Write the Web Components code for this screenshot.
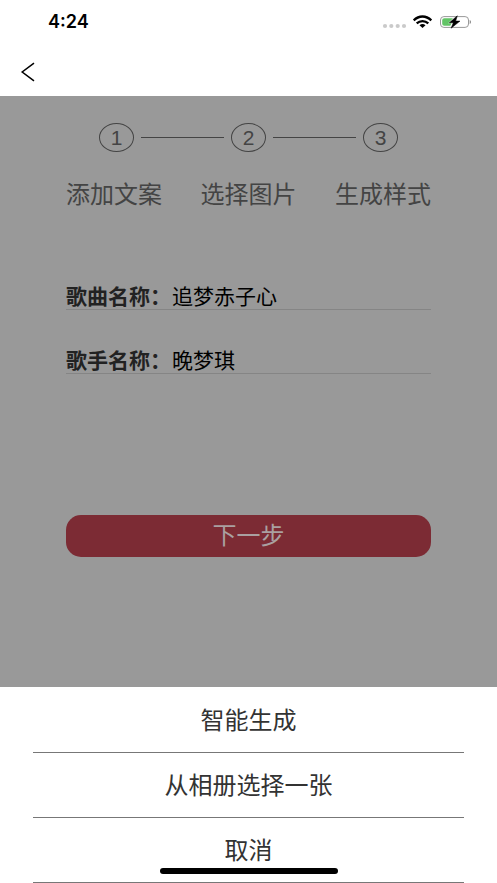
<!DOCTYPE html>
<html lang="zh-CN">
<head>
<meta charset="utf-8">
<meta name="viewport" content="width=device-width, initial-scale=1">
<title>歌曲信息</title>
<style>
  body { margin: 0; font-family: "Liberation Sans", "Noto Sans CJK SC", sans-serif; background: #fff; color: #333; }
</style>
</head>
<body>
<song-app></song-app>
<script>
const define = (name, markup, setup) => {
  const template = document.createElement('template');
  template.innerHTML = `<style>*{box-sizing:border-box}</style>${markup}`;
  customElements.define(name, class extends HTMLElement {
    constructor() {
      super();
      this.attachShadow({ mode: 'open' }).append(template.content.cloneNode(true));
    }
    connectedCallback() { if (setup) setup(this, this.shadowRoot); }
  });
};

define('status-bar', `
<style>
  :host { display: flex; justify-content: space-between; align-items: center; height: 44px; padding: 0 26px 0 48px; color: #000; }
  time { font: 600 18px/20px Inter, sans-serif; }
  svg { display: block; }
</style>
<time>4:24</time>
<svg width="90" height="16" viewBox="0 0 90 16" role="img" aria-label="信号、无线网络、电池充电中">
  <g fill="#cacaca"><circle cx="4" cy="12" r="2.1"/><circle cx="10.3" cy="12" r="2.1"/><circle cx="16.7" cy="12" r="2.1"/><circle cx="23" cy="12" r="2.1"/></g>
  <g fill="none" stroke="#000" stroke-width="2.3">
    <path d="M32.7 6.3C38 1.2 45 1.2 50.3 6.3"/>
    <path d="M35.7 9.4C39 6.3 44 6.3 47.3 9.4"/>
  </g>
  <path d="M38.5 11.2Q41.5 8.8 44.5 11.2L41.5 14Z"/>
  <rect x="59.5" y="2.6" width="28" height="10.8" rx="3.4" fill="#fff" stroke="#999"/>
  <path d="M63.3 4.2H72L67.2 9.2H70.5L69.3 11.8H63.3Q61.2 11.8 61.2 9.8V6.2Q61.2 4.2 63.3 4.2Z" fill="#62c466"/>
  <path d="M76.3 1.8L68.3 8.7H72.3L70.1 14.2L79 7.1H74.7Z" stroke="#000" stroke-width=".5" stroke-linejoin="round"/>
  <path d="M88.7 6V10Q90 9.4 90 8T88.7 6Z" fill="#888"/>
</svg>`);

define('nav-bar', `
<style>
  :host { display: flex; align-items: center; height: 52px; padding: 4px 12px 0; }
  button { display: grid; place-items: center; width: 32px; height: 32px; padding: 0; border: 0; background: none; color: #000; }
</style>
<button type="button" aria-label="返回">
  <svg width="16" height="20" viewBox="0 0 16 20" fill="none" stroke="currentColor" stroke-width="1.5"><path d="M14 1.2L2.2 10L14 18.8"/></svg>
</button>`);

define('step-number', `
<style>
  :host { display: grid; place-items: center; width: 35px; height: 29px; border: 1px solid #444; border-radius: 50%; font-size: 21px; line-height: 27px; color: #444; }
</style>
<slot></slot>`);

define('step-progress', `
<style>
  :host { display: block; color: #444; }
  .track { display: flex; align-items: center; gap: 7px; padding: 0 33px; }
  .line { flex: 1; height: 1px; background: #444; }
  .names { display: flex; justify-content: space-between; margin-top: 27px; font-size: 24px; line-height: 32px; }
</style>
<div class="track">
  <step-number>1</step-number><span class="line"></span>
  <step-number>2</step-number><span class="line"></span>
  <step-number>3</step-number>
</div>
<div class="names"><span>添加文案</span><span>选择图片</span><span>生成样式</span></div>`);

define('text-field', `
<style>
  :host { display: block; }
  div { display: flex; align-items: center; gap: 1px; border-bottom: 1px solid #858585; font-size: 21px; line-height: 24px; }
  label { font-weight: 700; color: #222; }
  input { flex: 1; min-width: 0; height: 24px; margin: 0; padding: 0; border: 0; outline: 0; background: none; font: inherit; color: #000; }
</style>
<div><label for="field"></label><input id="field" type="text"></div>`, (host, root) => {
  root.querySelector('label').textContent = host.getAttribute('label');
  root.querySelector('input').value = host.getAttribute('value');
});

define('primary-button', `
<style>
  :host { display: block; }
  button { display: block; width: 100%; height: 42px; padding: 0; border: 0; border-radius: 15px; background: #7c2b34; color: #aaa0a1; font: inherit; font-size: 24px; line-height: 42px; }
</style>
<button type="button"><slot></slot></button>`);

define('sheet-action', `
<style>
  :host { display: block; }
  button { display: block; width: 100%; height: 65px; padding: 2px 0 0; border: 0; border-bottom: 1px solid #777; background: none; color: #333; font: inherit; font-size: 24px; line-height: 62px; }
</style>
<button type="button"><slot></slot></button>`);

define('action-sheet', `
<style>
  :host { display: block; position: relative; padding: 1px 33px 0; background: #fff; }
  .home { position: absolute; left: 50%; bottom: 9px; width: 178px; height: 6px; margin-left: -89px; border-radius: 3px; background: #000; }
</style>
<slot></slot><span class="home"></span>`);

define('song-app', `
<style>
  :host { display: flex; flex-direction: column; min-height: 100vh; }
  main { flex: 1; padding: 27px 66px; background: #999; }
  form { display: grid; gap: 39px; margin-top: 74px; }
  primary-button { margin-top: 102px; }
</style>
<status-bar></status-bar>
<nav-bar></nav-bar>
<main>
  <step-progress></step-progress>
  <form>
    <text-field label="歌曲名称：" value="追梦赤子心"></text-field>
    <text-field label="歌手名称：" value="晚梦琪"></text-field>
    <primary-button>下一步</primary-button>
  </form>
</main>
<action-sheet role="dialog" aria-label="选择图片">
  <sheet-action>智能生成</sheet-action>
  <sheet-action>从相册选择一张</sheet-action>
  <sheet-action>取消</sheet-action>
</action-sheet>
`);
</script>
</body>
</html>
